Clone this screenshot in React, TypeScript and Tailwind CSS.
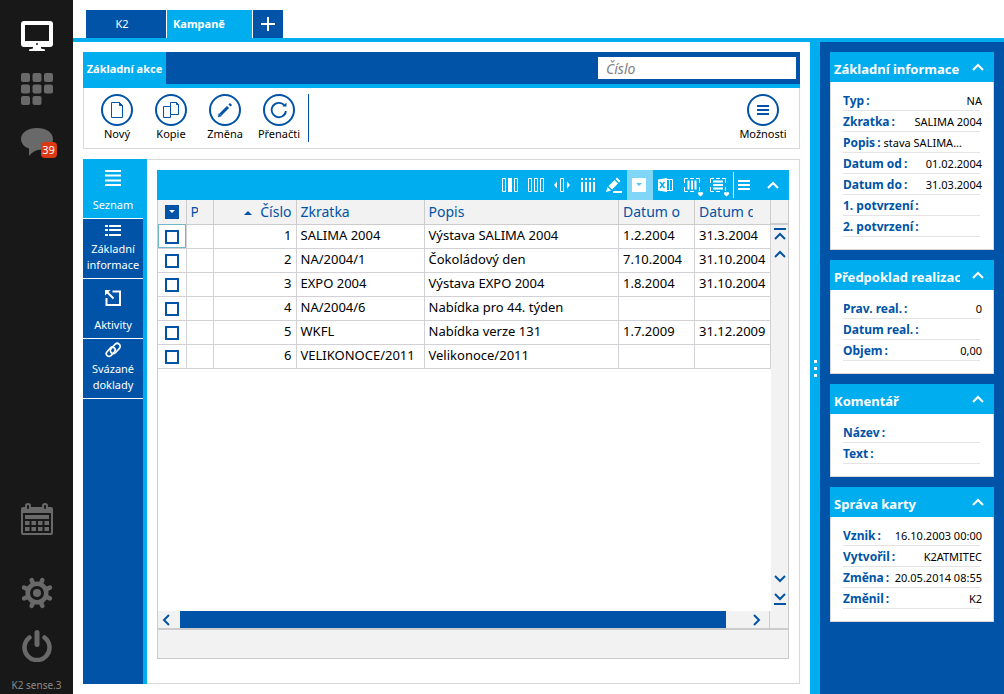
import React from 'react';

interface IconProps {
  className?: string;
}

interface Campaign {
  id: number;
  code: string;
  label: string;
  from: string;
  to: string;
}

interface CardRow {
  label: string;
  value?: string;
  clipped?: boolean;
}

const campaigns: Campaign[] = [
  { id: 1, code: 'SALIMA 2004', label: 'Výstava SALIMA 2004', from: '1.2.2004', to: '31.3.2004' },
  { id: 2, code: 'NA/2004/1', label: 'Čokoládový den', from: '7.10.2004', to: '31.10.2004' },
  { id: 3, code: 'EXPO 2004', label: 'Výstava EXPO 2004', from: '1.8.2004', to: '31.10.2004' },
  { id: 4, code: 'NA/2004/6', label: 'Nabídka pro 44. týden', from: '', to: '' },
  { id: 5, code: 'WKFL', label: 'Nabídka verze 131', from: '1.7.2009', to: '31.12.2009' },
  { id: 6, code: 'VELIKONOCE/2011', label: 'Velikonoce/2011', from: '', to: '' },
];

const cards: { title: string; rows: CardRow[] }[] = [
  {
    title: 'Základní informace',
    rows: [
      { label: 'Typ', value: 'NA' },
      { label: 'Zkratka', value: 'SALIMA 2004' },
      { label: 'Popis', value: 'stava SALIMA...', clipped: true },
      { label: 'Datum od', value: '01.02.2004' },
      { label: 'Datum do', value: '31.03.2004' },
      { label: '1. potvrzení' },
      { label: '2. potvrzení' },
    ],
  },
  {
    title: 'Předpoklad realizace',
    rows: [{ label: 'Prav. real.', value: '0' }, { label: 'Datum real.' }, { label: 'Objem', value: '0,00' }],
  },
  { title: 'Komentář', rows: [{ label: 'Název' }, { label: 'Text' }] },
  {
    title: 'Správa karty',
    rows: [
      { label: 'Vznik', value: '16.10.2003 00:00' },
      { label: 'Vytvořil', value: 'K2ATMITEC' },
      { label: 'Změna', value: '20.05.2014 08:55' },
      { label: 'Změnil', value: 'K2' },
    ],
  },
];

/* Left bar icons */

const MonitorIcon = () => (
  <svg viewBox="0 0 32 32" className="w-8 h-8">
    <path
      fillRule="evenodd"
      fill="#fff"
      d="M3 1h26a3 3 0 0 1 3 3v20a3 3 0 0 1-3 3h-9v1q0 1 2 1h1q1 0 1 2H8q0-2 1-2h1q2 0 2-1v-1H3a3 3 0 0 1-3-3V4a3 3 0 0 1 3-3zM4 5v16h24V5z"
    />
    <circle cx="16" cy="24" r="1" fill="#181818" />
  </svg>
);

const TilesIcon = () => (
  <svg viewBox="0 0 32 32" className="w-8 h-8" fill="#696969">
    {[[0, 0], [11.5, 0], [23, 0], [0, 11.5], [11.5, 11.5], [23, 11.5], [0, 23], [11.5, 23]].map(([x, y]) => (
      <rect key={`${x}-${y}`} x={x} y={y} width="9" height="9" rx="2" />
    ))}
  </svg>
);

const ChatIcon = () => (
  <svg viewBox="0 0 32 32" className="w-8 h-8" fill="#696969">
    <path d="M16 2c9 0 16 4.500 16 11s-7 11-15 11q-5 1-9 6V22.500C3 21 0 17 0 13 0 6.500 7 2 16 2z" />
  </svg>
);

const CalendarIcon = () => (
  <svg viewBox="0 0 32 32" className="w-8 h-8">
    <rect x="1" y="5" width="30" height="26" rx="1" fill="none" stroke="#696969" strokeWidth="2" />
    <path d="M1 5h30v5H1z" fill="#696969" />
    <rect x="5" y="1" width="4" height="6" rx="2" fill="#181818" stroke="#696969" strokeWidth="2" />
    <rect x="22" y="1" width="4" height="6" rx="2" fill="#181818" stroke="#696969" strokeWidth="2" />
    <path d="M4 12h24v4H4z" fill="#696969" />
    {[18, 24].map(y => [4, 10.5, 17, 23.5].map(x => (
      <rect key={`${x}-${y}`} x={x} y={y} width="4.500" height="4" fill="#696969" />
    )))}
  </svg>
);

const GearIcon = () => (
  <svg viewBox="0 0 32 32" className="w-8 h-8">
    <g stroke="#696969" strokeWidth="4.500" strokeLinecap="round">
      {[22.5, 67.5, 112.5, 157.5].map(a => (
        <path key={a} d="M16 2v28" transform={`rotate(${a} 16 16)`} />
      ))}
    </g>
    <circle cx="16" cy="16" r="11.500" fill="#696969" />
    <circle cx="16" cy="16" r="7" fill="#181818" />
    <circle cx="16" cy="16" r="4" fill="#696969" />
  </svg>
);

const PowerIcon = () => (
  <svg viewBox="0 0 32 32" className="w-8 h-8" fill="none" stroke="#696969" strokeLinecap="round">
    <path d="M8.500 7.500a12.500 12.500 0 1 0 15 0" strokeWidth="4.500" />
    <path d="M16 2.500v12" strokeWidth="5" />
  </svg>
);

/* Round ribbon icons */

const Round: React.FC<{ children: React.ReactNode }> = ({ children }) => (
  <svg viewBox="0 0 32 32" className="w-8 h-8" fill="none" stroke="#0053a6">
    <circle cx="16" cy="16" r="15" strokeWidth="2" />
    {children}
  </svg>
);

const NewIcon = () => (
  <Round>
    <path d="M10.500 8.500h8l3 3v12h-11z" />
    <path d="M18.500 8.500v3h3z" fill="#0053a6" />
  </Round>
);

const CopyIcon = () => (
  <Round>
    <path d="M15.500 20.500v3h-7v-11h7M15.500 8.500h6l2 2v10h-8z" />
    <path d="M21.500 8.500v2h2z" fill="#0053a6" />
  </Round>
);

const EditIcon = () => (
  <Round>
    <path d="M9 23l1-3.500 2.500 2.500z" fill="#0053a6" strokeWidth="0.500" />
    <path d="M11.500 20.500l7.500-7.500M20.500 11.500l1.500-1.500" strokeWidth="3" />
  </Round>
);

const ReloadIcon = () => (
  <Round>
    <path d="M21.500 11.500a7.200 7.200 0 1 0 1.500 5.500" strokeWidth="1.800" />
    <path d="M19.500 12.500h4V8.500z" fill="#0053a6" stroke="none" />
  </Round>
);

const OptionsIcon = () => (
  <Round>
    <path d="M10 12h12M10 16h12M10 20h12" strokeWidth="2" shapeRendering="crispEdges" />
  </Round>
);

/* Section tab icons */

const ListIcon = () => (
  <svg viewBox="0 0 16 16" className="w-4 h-4" stroke="#fff" strokeWidth="2">
    <path d="M0 1h16M0 5.500h16M0 10.500h16M0 15h16" />
  </svg>
);

const DetailsIcon = () => (
  <svg viewBox="0 0 16 16" className="w-4 h-4" stroke="#fff" strokeWidth="2" shapeRendering="crispEdges">
    <path d="M0 4h3M4 4h12M0 8h3M4 8h12M0 13h3M4 13h12" />
  </svg>
);

const ActivityIcon = () => (
  <svg viewBox="0 0 16 16" className="w-4 h-4" fill="none" stroke="#fff" strokeWidth="2">
    <path d="M7.500 1.500H15V15H1.500V8M1.500 1.500l7 7" />
    <path d="M0 0h5.500L0 5.500z" fill="#fff" stroke="none" />
  </svg>
);

const LinkIcon = () => (
  <svg viewBox="0 0 16 16" className="w-4 h-4" fill="none" stroke="#fff" strokeWidth="1.700">
    <rect x="4.500" y="3.500" width="11.500" height="6" rx="3" transform="rotate(-48 10.250 6.500)" />
    <rect x="0.500" y="7" width="10.500" height="5.500" rx="2.750" transform="rotate(-48 5.750 9.750)" />
  </svg>
);

/* Grid toolbar icons, drawn on the full button area */

const Tool: React.FC<{ label: string; active?: boolean; children: React.ReactNode }> = ({ label, active, children }) => (
  <button aria-label={label} className={active ? 'w-[26px] h-[30px] bg-[#7fd6f7]' : 'w-[26px] h-[30px]'}>
    <svg viewBox="0 0 26 30" className="w-[26px] h-[30px]" fill="none" stroke="#fff">
      {children}
    </svg>
  </button>
);

const Chevron: React.FC<IconProps> = ({ className = '' }) => (
  <svg viewBox="0 0 12 8" className={`w-3 h-2 ${className}`} fill="none" stroke="currentColor" strokeWidth="2">
    <path d="M1 7l5-5 5 5" />
  </svg>
);

const EdgeChevron: React.FC<IconProps> = ({ className = '' }) => (
  <svg viewBox="0 0 12 12" className={`w-3 h-3 ${className}`} fill="none" stroke="currentColor" strokeWidth="2">
    <path d="M0 1h12M1 11l5-5 5 5" />
  </svg>
);

const GridToolbar = () => (
  <div className="flex h-[30px] items-center justify-end bg-[#00adef] text-white">
    <Tool label="Sloupec">
      <path d="M5.500 8.500h3v13h-3zM17.500 8.500h3v13h-3z" />
      <path d="M11 8h4v14h-4z" fill="#fff" stroke="none" />
    </Tool>
    <Tool label="Sloupce">
      <path d="M5.500 8.500h3v13h-3zM11.500 8.500h3v13h-3zM17.500 8.500h3v13h-3z" />
    </Tool>
    <Tool label="Šířka sloupců">
      <path d="M11.500 8.500h3v13h-3z" />
      <path d="M8 11.500v7L5 15zM18 11.500v7l3-3.500z" fill="#fff" stroke="none" />
    </Tool>
    <Tool label="Součty">
      <path d="M7 8v2M7 12v10M11 8v2M11 12v10M15 8v2M15 12v10M19 8v2M19 12v10" strokeWidth="2" />
    </Tool>
    <Tool label="Upravit">
      <path d="M5 22l1.500-5 3.500 3.500zM7.500 16l6-6 3.500 3.500-6 6zM14.500 9l1.500-1.500 3.500 3.500-1.500 1.500z" fill="#fff" stroke="none" />
      <path d="M12 22h9" strokeWidth="2" />
    </Tool>
    <Tool label="Filtr" active>
      <path d="M5 8h14v14H5z" fill="#fff" stroke="none" />
      <path d="M9 13h6l-3 3z" fill="#51c8f4" stroke="none" />
    </Tool>
    <Tool label="Excel">
      <path d="M14 9.500h5.500v11H14" />
      <path d="M16.500 10v10" />
      <path d="M5 9.500L14 8v14l-9-1.500z" fill="#fff" stroke="none" />
      <path d="M7 12l4.500 6M11.500 12L7 18" stroke="#00adef" strokeWidth="1.500" />
    </Tool>
    <Tool label="Výběr sloupců">
      <path d="M9 8.500H5.500V13M5.500 17v4.500H9M11 8.500h4M11 21.500h4M17 8.500h3.500V13M20.500 17v4" />
      <path d="M9.500 10.500v9M13 10.500v9M16.500 10.500v9" strokeWidth="2" />
      <path d="M19 22.500q1.500-1 2.500 0 1-1 2.500 0 1 1.500-2.500 4Q18 24 19 22.500z" fill="#fff" stroke="none" />
    </Tool>
    <Tool label="Výběr řádků">
      <path d="M9 8.500H5.500V13M5.500 17v4.500H9M11 8.500h4M11 21.500h4M17 8.500h3.500V13M20.500 17v4" />
      <path d="M8 11.500h10M8 15h10M8 18.500h10" strokeWidth="2" />
      <path d="M19 22.500q1.500-1 2.500 0 1-1 2.500 0 1 1.500-2.500 4Q18 24 19 22.500z" fill="#fff" stroke="none" />
    </Tool>
    <span className="ml-0.5 h-[26px] w-px bg-white" />
    <button aria-label="Nabídka" className="flex h-[30px] w-5 items-center justify-center">
      <svg viewBox="0 0 12 10" className="w-3 h-2.5" stroke="#fff" strokeWidth="2">
        <path d="M0 1h12M0 5h12M0 9h12" />
      </svg>
    </button>
    <button aria-label="Sbalit" className="ml-[3px] flex h-[30px] w-8 items-center justify-center">
      <Chevron />
    </button>
  </div>
);

const CampaignTable = () => (
  <table className="w-full table-fixed border-collapse text-left text-[13px]">
    <colgroup>
      <col className="w-[28px]" />
      <col className="w-[27px]" />
      <col className="w-[83px]" />
      <col className="w-[128px]" />
      <col />
      <col className="w-[76px]" />
      <col className="w-[76px]" />
    </colgroup>
    <thead className="bg-[#f2f2f2] text-sm leading-5 text-[#0053a6]">
      <tr className="h-6 [&>th]:border-r [&>th]:border-b [&>th]:border-[#cccccc] [&>th]:font-normal [&>th]:overflow-hidden [&>th]:whitespace-nowrap">
        <th>
          <button aria-label="Vybrat" className="mx-auto flex h-3.5 w-3.5 items-center justify-center bg-[#0053a6]">
            <svg viewBox="0 0 6 3" className="w-1.5 h-[3px]" fill="#fff"><path d="M0 0h6L3 3z" /></svg>
          </button>
        </th>
        <th className="pl-1"><span className="block w-[7px] overflow-hidden">P</span></th>
        <th className="pr-1 text-right">
          <svg viewBox="0 0 8 4" className="mr-2 inline w-2 h-1" fill="#0053a6"><path d="M0 4h8L4 0z" /></svg>
          Číslo
        </th>
        <th className="pl-1">Zkratka</th>
        <th className="pl-1">Popis</th>
        <th className="pl-1">Datum o</th>
        <th className="pl-1"><span className="block w-[54px] overflow-hidden">Datum d</span></th>
      </tr>
    </thead>
    <tbody className="text-black">
      {campaigns.map((row, i) => (
        <tr key={row.id} className="h-6 [&>td]:border-r [&>td]:border-b [&>td]:border-[#d2d2d6] [&>td]:whitespace-nowrap [&>td]:pb-0.5 [&>td]:leading-5">
          <td className={i === 0 ? 'outline outline-1 -outline-offset-1 outline-[#6fb7c8]' : ''}>
            <input
              type="checkbox"
              aria-label={row.code}
              className="mx-auto mt-1 block h-3.5 w-3.5 appearance-none border-2 border-[#0053a6] bg-white"
            />
          </td>
          <td></td>
          <td className="pr-1 text-right">{row.id}</td>
          <td className="pl-1">{row.code}</td>
          <td className="pl-1">{row.label}</td>
          <td className="pl-1">{row.from}</td>
          <td className="pl-1">{row.to}</td>
        </tr>
      ))}
    </tbody>
  </table>
);

const InfoCard: React.FC<{ title: string; rows: CardRow[] }> = ({ title, rows }) => (
  <section className="bg-white">
    <header className="flex h-[30px] items-center justify-between bg-[#00adef] pl-1 pr-2.5 text-white">
      <h2 className="w-[126px] overflow-hidden whitespace-nowrap pt-1 text-[13px] leading-5 font-bold">{title}</h2>
      <button aria-label={title}><Chevron /></button>
    </header>
    <dl className="border border-t-0 border-[#d8d8d8] px-3 pt-2 pb-3 text-xs">
      {rows.map(row => (
        <div key={row.label} className="mr-px flex h-[21px] items-center justify-between border-b border-[#e4e4e4] pt-0.5 whitespace-nowrap">
          <dt className="font-bold text-[#0053a6]">{row.label}<span className="ml-0.5">:</span></dt>
          {row.clipped ? (
            <dd className="mr-[18px] flex w-[78px] justify-end overflow-hidden text-[11px] text-black">{row.value}</dd>
          ) : (
            <dd className="-mr-0.5 text-[11px] text-black">{row.value}</dd>
          )}
        </div>
      ))}
    </dl>
  </section>
);

const ribbonActions = [
  { label: 'Nový', icon: <NewIcon /> },
  { label: 'Kopie', icon: <CopyIcon /> },
  { label: 'Změna', icon: <EditIcon /> },
  { label: 'Přenačti', icon: <ReloadIcon /> },
];

const sections = [
  { label: 'Základní informace', icon: <DetailsIcon />, wide: true },
  { label: 'Aktivity', icon: <ActivityIcon />, wide: false },
  { label: 'Svázané doklady', icon: <LinkIcon />, wide: true },
];

const App: React.FC = () => (
  <div className="flex min-h-screen bg-white font-['Noto_Sans',sans-serif]">
    {/* Left application bar */}
    <nav className="flex w-[73px] shrink-0 flex-col items-center bg-[#181818] pt-5 pb-px">
      <button aria-label="Plocha"><MonitorIcon /></button>
      <button aria-label="Moduly" className="mt-[21px]"><TilesIcon /></button>
      <button aria-label="Zprávy" className="relative mt-[21px]">
        <ChatIcon />
        <span className="absolute left-5 top-4 h-4 w-4 rounded-sm bg-[#dc3912] text-center text-[11px] leading-4 text-white">39</span>
      </button>
      <button aria-label="Kalendář" className="mt-auto"><CalendarIcon /></button>
      <button aria-label="Nastavení" className="mt-[42px]"><GearIcon /></button>
      <button aria-label="Odhlásit" className="mt-[21px]"><PowerIcon /></button>
      <span className="mt-[15px] text-[10px] leading-4 text-[#8a8a8a]">K2 sense.3</span>
    </nav>

    <div className="flex min-w-0 flex-1 flex-col">
      {/* Document tabs */}
      <div className="flex gap-px border-b-4 border-[#00adef] pl-[13px] pt-2.5 text-[11px] text-white">
        <button className="h-7 w-20 bg-[#0053a6] pr-2">K2</button>
        <button className="h-7 w-[85px] bg-[#00adef] pl-1.5 text-left font-bold">Kampaně</button>
        <button aria-label="Nová záložka" className="flex h-7 w-[30px] items-center justify-center bg-[#0053a6]">
          <svg viewBox="0 0 14 14" className="w-3.5 h-3.5" stroke="#fff" strokeWidth="2"><path d="M7 0v14M0 7h14" /></svg>
        </button>
      </div>

      <div className="flex flex-1">
        <main className="flex min-w-0 flex-1 flex-col gap-2.5 p-2.5">
          {/* Ribbon */}
          <div>
            <div className="flex h-9 border-b-4 border-[#00adef] bg-[#0053a6]">
              <button className="w-[83px] bg-[#00adef] pt-0.5 text-[11px] font-bold text-white">Základní akce</button>
              <input
                aria-label="Číslo"
                placeholder="Číslo"
                className="mt-[5px] mr-1 ml-auto h-[22px] w-[198px] bg-white px-2 text-sm italic placeholder:text-[#808080]"
              />
            </div>
            <div className="flex h-[61px] items-start border border-t-0 border-[#d8d8d8] pt-1.5 pl-1.5 text-[11px] text-black">
              {ribbonActions.map(action => (
                <button key={action.label} className="flex w-[54px] flex-col items-center leading-4">
                  {action.icon}
                  {action.label}
                </button>
              ))}
              <span className="ml-0.5 h-12 w-px bg-[#0053a6]" />
              <button className="mr-[9px] ml-auto flex w-[54px] flex-col items-center leading-4">
                <OptionsIcon />
                Možnosti
              </button>
            </div>
          </div>

          <div className="flex flex-1">
            {/* Section tabs */}
            <div className="w-16 border-r-4 border-[#00adef] bg-[#0053a6] text-[11px] leading-4 text-white">
              <button className="flex h-[60px] w-full flex-col items-center border-b border-white bg-[#00adef] pt-[11px]">
                <ListIcon />
                <span className="mt-[11px]">Seznam</span>
              </button>
              {sections.map(section => (
                <button
                  key={section.label}
                  className={`flex h-[60px] w-full flex-col items-center border-b border-white ${section.wide ? 'pt-[3px]' : 'pt-[11px]'}`}
                >
                  {section.icon}
                  <span className={section.wide ? 'mt-[3px]' : 'mt-[11px]'}>{section.label}</span>
                </button>
              ))}
            </div>

            <div className="flex min-w-0 flex-1 flex-col border border-l-0 border-[#d8d8d8] p-2.5 pb-6">
              <GridToolbar />
              <div className="flex flex-1 flex-col border border-t-0 border-[#cccccc]">
                <div className="flex flex-1">
                  <div className="min-w-0 flex-1">
                    <CampaignTable />
                  </div>
                  <div className="flex w-[17px] flex-col items-center bg-[#f2f2f2] text-[#0053a6]">
                    <span className="h-[25px] w-full border-b-2 border-[#cccccc]" />
                    <button aria-label="Na začátek" className="mt-[3px]"><EdgeChevron className="block" /></button>
                    <button aria-label="Nahoru" className="mt-2.5"><Chevron className="block" /></button>
                    <button aria-label="Dolů" className="mt-auto"><Chevron className="block rotate-180" /></button>
                    <button aria-label="Na konec" className="mt-2.5 mb-1.5"><EdgeChevron className="block rotate-180" /></button>
                  </div>
                </div>
                <div className="flex h-[19px] items-stretch border-b-2 border-[#cccccc] bg-[#f2f2f2] text-[#0053a6]">
                  <button aria-label="Vlevo" className="flex w-[22px] items-center pl-0.5"><Chevron className="-rotate-90" /></button>
                  <span className="flex-1 bg-[#0053a6]" />
                  <button aria-label="Vpravo" className="flex w-11 items-center justify-end border-r border-[#cccccc] pr-1.5"><Chevron className="rotate-90" /></button>
                  <span className="w-[18px]" />
                </div>
                <div className="h-7 bg-[#f2f2f2]" />
              </div>
            </div>
          </div>
        </main>

        {/* Splitter */}
        <div className="flex w-2.5 flex-col items-center justify-center gap-1 bg-[#00adef]">
          <span className="h-[3px] w-[3px] bg-white" />
          <span className="h-[3px] w-[3px] bg-white" />
          <span className="h-[3px] w-[3px] bg-white" />
        </div>

        <aside className="flex w-[184px] shrink-0 flex-col gap-2.5 bg-[#0053a6] p-2.5">
          {cards.map(card => (
            <InfoCard key={card.title} title={card.title} rows={card.rows} />
          ))}
        </aside>
      </div>
    </div>
  </div>
);

export default App;
